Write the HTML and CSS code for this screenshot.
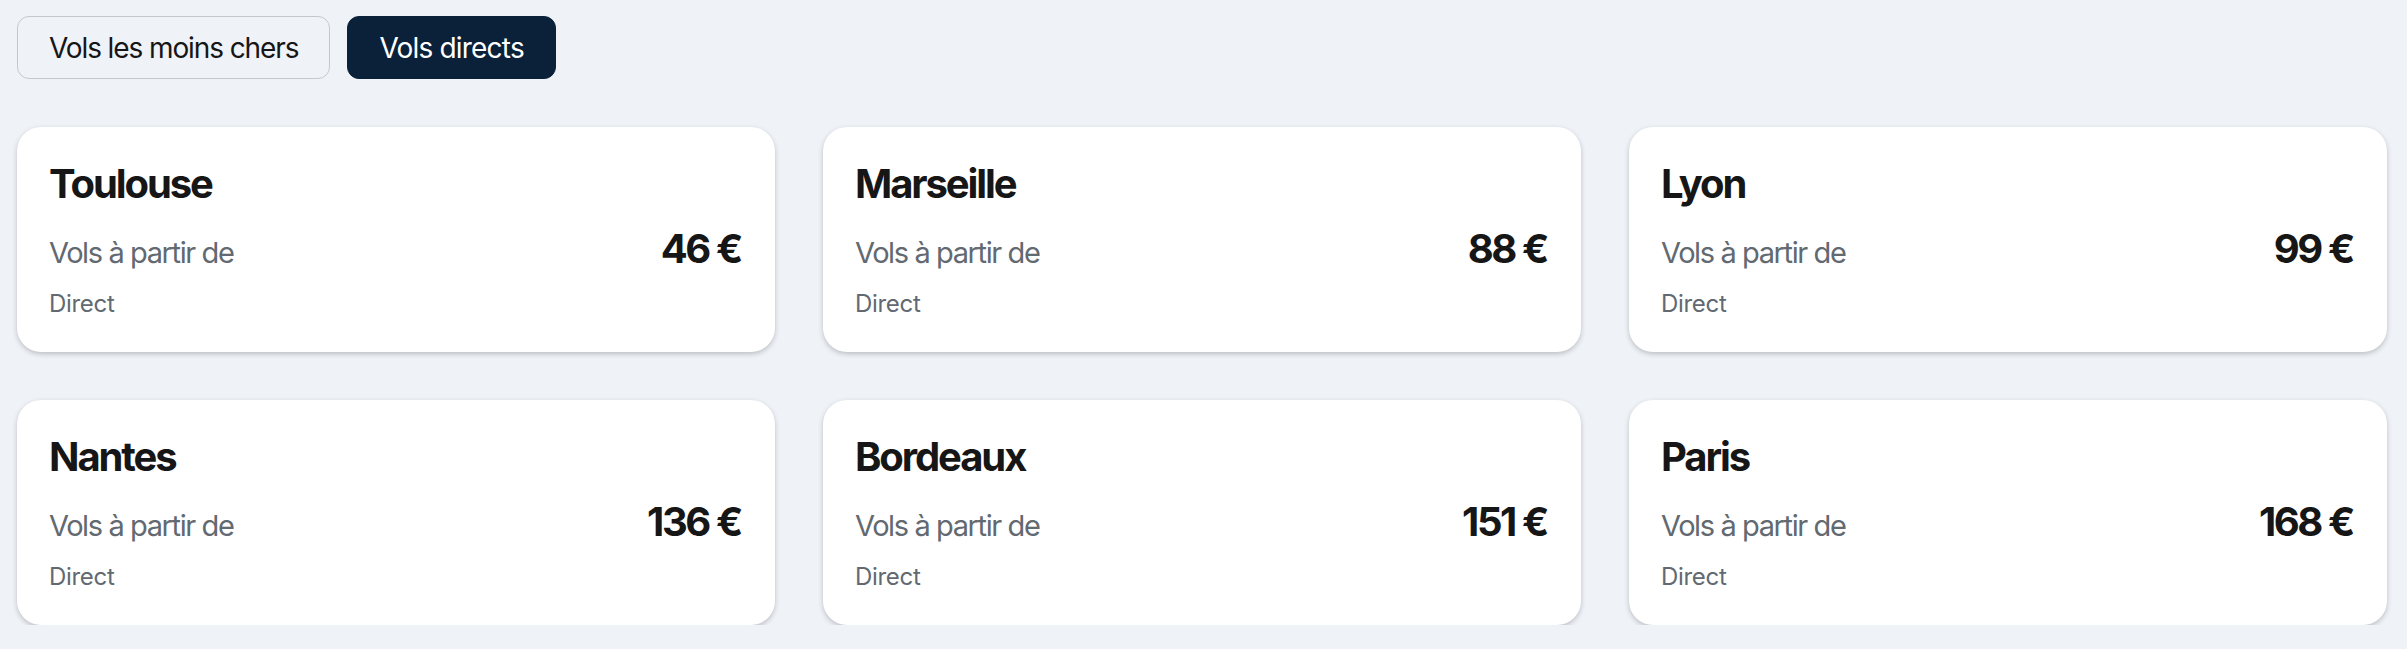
FILE: index.html
```html
<!DOCTYPE html>
<html lang="fr">
<head>
<meta charset="utf-8">
<title>Vols</title>
<link rel="stylesheet" href="styles.css">
</head>
<body>
<main class="page">
  <div class="tabs">
    <button class="tab">Vols les moins chers</button>
    <button class="tab tab-active">Vols directs</button>
  </div>
  <section class="grid">
    <article class="card">
      <h3 class="city">Toulouse</h3>
      <div class="row"><span class="label">Vols à partir de</span><span class="price">46 €</span></div>
      <div class="meta">Direct</div>
    </article>
    <article class="card">
      <h3 class="city">Marseille</h3>
      <div class="row"><span class="label">Vols à partir de</span><span class="price">88 €</span></div>
      <div class="meta">Direct</div>
    </article>
    <article class="card">
      <h3 class="city">Lyon</h3>
      <div class="row"><span class="label">Vols à partir de</span><span class="price">99 €</span></div>
      <div class="meta">Direct</div>
    </article>
    <article class="card">
      <h3 class="city">Nantes</h3>
      <div class="row"><span class="label">Vols à partir de</span><span class="price">136 €</span></div>
      <div class="meta">Direct</div>
    </article>
    <article class="card">
      <h3 class="city">Bordeaux</h3>
      <div class="row"><span class="label">Vols à partir de</span><span class="price">151 €</span></div>
      <div class="meta">Direct</div>
    </article>
    <article class="card">
      <h3 class="city">Paris</h3>
      <div class="row"><span class="label">Vols à partir de</span><span class="price">168 €</span></div>
      <div class="meta">Direct</div>
    </article>
  </section>
</main>
</body>
</html>
```
FILE: styles.css
```css
* { box-sizing: border-box; }
html, body {
  margin: 0;
  background: #eff3f8;
}
body {
  font-family: Inter, "Liberation Sans", sans-serif;
  color: #161616;
}
.page {
  padding: 16px 20px 0 17px;
}
.tabs {
  display: flex;
  gap: 17px;
}
.tab {
  font-family: inherit;
  font-size: 28px;
  letter-spacing: -1.1px;
  line-height: 34px;
  height: 63px;
  padding: 0 31px;
  border: 1px solid #c2c9cd;
  border-radius: 12px;
  background: transparent;
  color: #161616;
  cursor: pointer;
}
.tab-active {
  background: #0b2039;
  border-color: #0b2039;
  color: #ffffff;
  letter-spacing: -0.8px;
}
.grid {
  margin-top: 48px;
  display: grid;
  grid-template-columns: repeat(3, 1fr);
  column-gap: 48px;
  row-gap: 48px;
}
.card {
  background: #ffffff;
  border-radius: 24px;
  padding: 33px 34px 32px 32px;
  box-shadow: 0 2px 5px rgba(37, 32, 31, 0.25);
  height: 225px;
}
.city {
  margin: 0;
  font-size: 40px;
  line-height: 48px;
  font-weight: 700;
  letter-spacing: -2.1px;
}
.row {
  margin-top: 17px;
  display: flex;
  justify-content: space-between;
  align-items: baseline;
  line-height: 48px;
}
.label {
  font-size: 29px;
  color: #626971;
  letter-spacing: -1.4px;
}
.price {
  font-size: 40px;
  font-weight: 700;
  letter-spacing: -2.4px;
}
.meta {
  margin-top: 11px;
  font-size: 24px;
  line-height: 32px;
  color: #626971;
  letter-spacing: -0.3px;
}
```
